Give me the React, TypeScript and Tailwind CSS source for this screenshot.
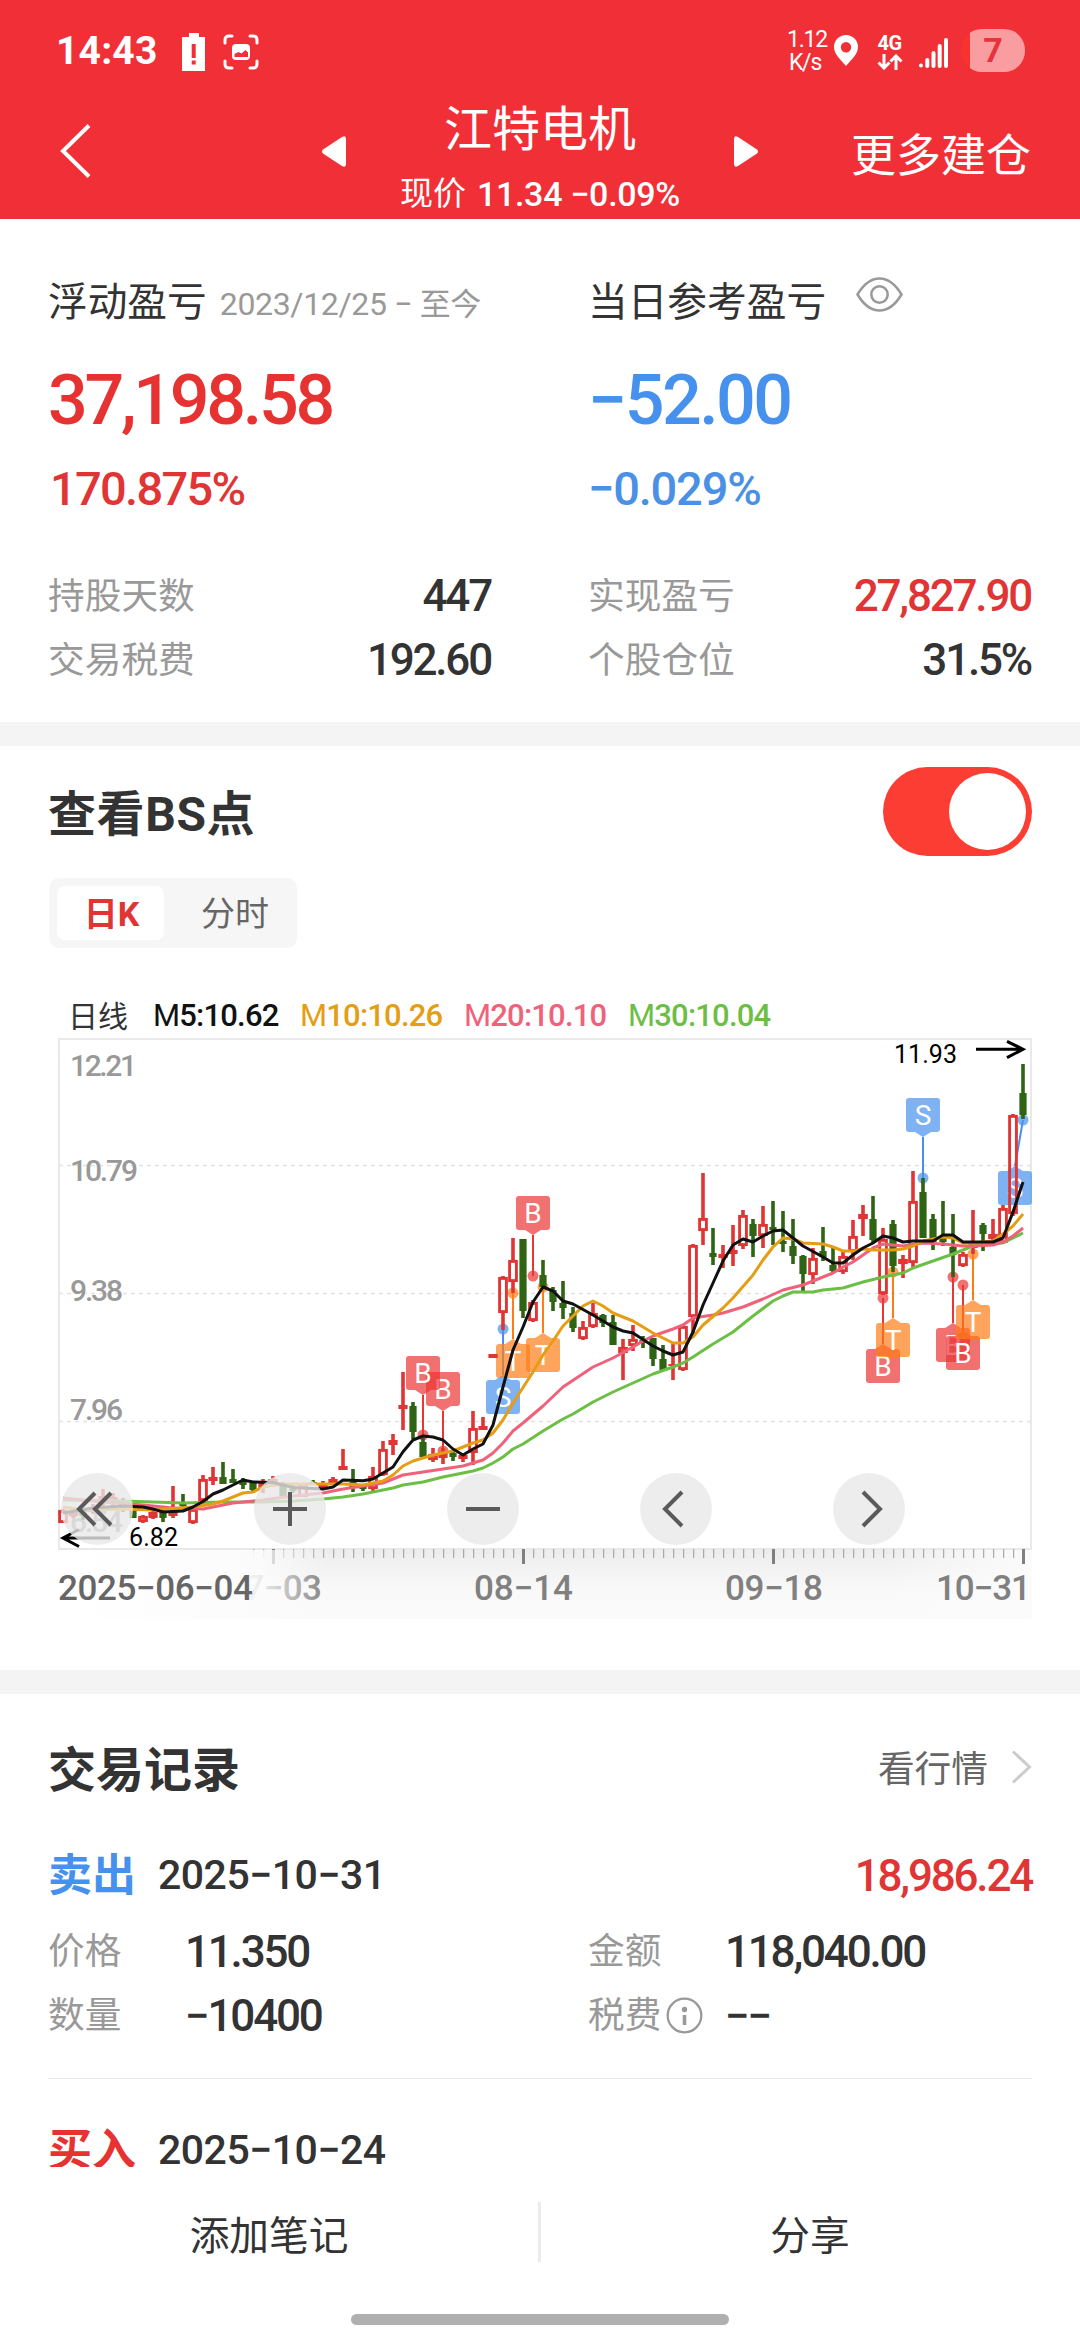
import React, { useState } from 'react';

type Candle = [kind: 'r' | 'h' | 'g', high: number, top: number, bottom: number, low: number];
type Point = [index: number, y: number];

const RED = '#e03535';
const GREEN = '#2f6414';

// r = solid red, h = hollow red, g = green; one candle every 10px
const candles: Candle[] = [
  ['h', 471, 472, 485, 485], ['r', 472, 474, 478, 480], ['g', 470, 473, 478, 482], ['r', 466, 470, 474, 476],
  ['r', 451, 458, 464, 470], ['r', 455, 459, 465, 468], ['g', 460, 464, 472, 474], ['g', 468, 469, 480, 480],
  ['h', 477, 478, 484, 485], ['r', 472, 474, 480, 481], ['g', 472, 474, 480, 484], ['r', 448, 474, 478, 480],
  ['g', 456, 465, 468, 469], ['h', 470, 471, 485, 486], ['h', 437, 441, 463, 464], ['r', 429, 439, 443, 447],
  ['g', 424, 439, 446, 446], ['g', 431, 441, 445, 445], ['g', 440, 443, 447, 451], ['g', 444, 445, 452, 455],
  ['r', 441, 443, 450, 455], ['r', 438, 441, 446, 447], ['g', 444, 445, 458, 458], ['g', 446, 450, 453, 455],
  ['h', 445, 446, 459, 459], ['g', 442, 444, 447, 447], ['r', 443, 446, 450, 451], ['r', 439, 441, 446, 447],
  ['r', 411, 428, 432, 432], ['g', 431, 444, 449, 454], ['g', 446, 448, 451, 453], ['h', 429, 438, 451, 454],
  ['h', 403, 411, 437, 438], ['r', 396, 402, 407, 417], ['r', 334, 367, 371, 392], ['g', 364, 368, 394, 401],
  ['g', 400, 404, 419, 421], ['h', 410, 416, 422, 424], ['r', 410, 414, 420, 426], ['g', 412, 415, 419, 423],
  ['r', 415, 417, 421, 424], ['h', 373, 390, 415, 427], ['r', 379, 388, 392, 392], ['r', 316, 316, 320, 320],
  ['h', 238, 239, 275, 292], ['h', 200, 222, 244, 255], ['g', 201, 201, 273, 280], ['h', 262, 264, 283, 284],
  ['g', 222, 237, 249, 249], ['g', 249, 252, 264, 273], ['g', 243, 265, 270, 281], ['g', 269, 275, 290, 294],
  ['h', 283, 289, 301, 302], ['h', 265, 275, 289, 290], ['g', 276, 277, 285, 289], ['g', 277, 284, 307, 307],
  ['h', 301, 309, 315, 342], ['h', 287, 301, 308, 313], ['g', 298, 302, 305, 310], ['g', 300, 300, 321, 328],
  ['g', 307, 321, 332, 332], ['r', 305, 326, 328, 342], ['h', 287, 288, 332, 333], ['h', 206, 207, 279, 299],
  ['h', 135, 180, 193, 207], ['g', 190, 215, 219, 227], ['r', 207, 216, 220, 230], ['r', 187, 212, 216, 228],
  ['h', 172, 177, 208, 211], ['g', 181, 186, 198, 219], ['h', 168, 186, 198, 210], ['g', 163, 189, 192, 207],
  ['g', 173, 203, 206, 214], ['g', 181, 208, 218, 226], ['g', 217, 218, 236, 253], ['h', 210, 220, 237, 246],
  ['g', 189, 213, 219, 223], ['g', 210, 227, 233, 234], ['h', 214, 218, 234, 236], ['h', 182, 198, 214, 222],
  ['h', 167, 176, 181, 198], ['g', 158, 181, 202, 205], ['h', 190, 201, 256, 257], ['g', 182, 186, 228, 234],
  ['h', 217, 221, 226, 240], ['h', 133, 163, 225, 229], ['g', 140, 154, 200, 200], ['g', 176, 181, 204, 212],
  ['g', 163, 200, 204, 208], ['g', 176, 209, 217, 239], ['h', 214, 216, 228, 229], ['r', 172, 203, 210, 216],
  ['g', 185, 187, 196, 213], ['h', 181, 196, 201, 205], ['h', 167, 170, 205, 206], ['h', 76, 77, 176, 178],
  ['g', 26, 55, 77, 81],
];

const averages: { color: string; points: Point[] }[] = [
  {
    color: '#6cbe45',
    points: [[0, 462], [6, 463], [9, 464], [12, 465], [16, 464], [20, 464], [23, 463], [26, 461], [28, 459], [30, 456], [33, 450], [34, 447], [36, 444], [38, 439], [41, 433], [42, 430], [43, 425], [44, 419], [45, 411], [46, 406], [48, 393], [50, 381], [51, 376], [53, 364], [55, 354], [57, 345], [59, 336], [61, 329], [62, 325], [63, 319], [65, 306], [67, 294], [69, 278], [71, 263], [72, 258], [73, 254], [75, 254], [76, 252], [78, 250], [80, 244], [82, 239], [84, 235], [85, 230], [87, 223], [89, 216], [90, 212], [91, 208], [92, 205], [94, 205], [95, 200], [96, 195]],
  },
  {
    color: '#f0617a',
    points: [[0, 460], [4, 464], [8, 467], [11, 470], [14, 471], [17, 465], [20, 462], [23, 458], [26, 455], [28, 451], [30, 448], [32, 445], [34, 437], [36, 434], [38, 431], [40, 428], [42, 422], [43, 415], [44, 405], [45, 393], [46, 385], [48, 368], [50, 349], [53, 329], [55, 320], [57, 309], [58, 303], [59, 298], [61, 291], [62, 287], [63, 280], [65, 277], [66, 275], [68, 269], [70, 261], [72, 252], [74, 247], [76, 239], [77, 235], [78, 229], [79, 224], [80, 217], [81, 210], [82, 206], [84, 208], [86, 205], [88, 206], [90, 208], [91, 208], [93, 207], [94, 204], [95, 198], [96, 190]],
  },
  {
    color: '#e59d14',
    points: [[0, 469], [2, 472], [6, 471], [9, 472], [13, 469], [15, 466], [16, 463], [17, 459], [18, 455], [19, 454], [20, 449], [22, 446], [28, 446], [30, 447], [32, 443], [33, 437], [34, 428], [35, 423], [36, 420], [37, 417], [38, 415], [39, 413], [41, 405], [42, 402], [43, 395], [44, 382], [45, 365], [47, 334], [48, 317], [49, 303], [50, 288], [52, 268], [53, 263], [54, 268], [55, 275], [57, 283], [59, 295], [61, 305], [62, 305], [63, 299], [64, 287], [66, 270], [67, 260], [69, 237], [70, 222], [71, 209], [72, 200], [73, 201], [74, 205], [76, 206], [77, 209], [78, 213], [79, 213], [80, 211], [81, 212], [83, 212], [84, 211], [85, 208], [86, 203], [88, 199], [89, 200], [90, 205], [91, 205], [93, 203], [94, 196], [95, 188], [96, 176]],
  },
  {
    color: '#111111',
    points: [[0, 475], [3, 470], [6, 468], [8, 469], [9, 471], [10, 474], [12, 473], [13, 469], [14, 463.5], [15, 456], [16, 452], [17, 447], [18, 442], [19, 444], [21, 444.5], [22, 447], [23, 449.5], [26, 451], [27, 449], [28, 442], [30, 442.7], [31, 441], [32, 435], [33, 429], [34, 413.7], [35, 402], [36, 398], [37, 399], [38, 402], [39, 411], [40, 417], [41, 411], [42, 406], [43, 387], [44, 349], [45, 312], [46, 289], [47, 264], [48, 249], [49, 253], [50, 263], [51, 266], [53, 277], [55, 289], [56, 293], [57, 295], [59, 308], [60, 313], [61, 317], [62, 314], [63, 294], [64, 267], [65, 245], [66, 223], [67, 207], [68, 201], [69, 204], [70, 198], [71, 193], [72, 192], [73, 200], [74, 208], [76, 219], [77, 225], [78, 225], [79, 217], [80, 210], [81, 205], [82, 198], [83, 200], [84, 204], [85, 203], [87, 203], [88, 197], [89, 197], [90, 204], [93, 204], [94, 200], [95, 174], [96, 144]],
  },
];

const markerColors = { B: '#eb3434', S: '#4791ee', T: '#ff7d17' };

const markers: { type: 'B' | 'S' | 'T'; x: number; boxTop: number; dotY: number; dotX?: number }[] = [
  { type: 'S', x: 445, boxTop: 342, dotY: 291 },
  { type: 'S', x: 865, boxTop: 60, dotY: 140 },
  { type: 'S', x: 957, boxTop: 133, dotY: 82, dotX: 965 },
  { type: 'B', x: 385, boxTop: 334, dotY: 413 },
  { type: 'B', x: 365, boxTop: 318, dotY: 397 },
  { type: 'B', x: 475, boxTop: 158, dotY: 238 },
  { type: 'T', x: 455, boxTop: 306, dotY: 255 },
  { type: 'T', x: 485, boxTop: 300, dotY: 249 },
  { type: 'B', x: 825, boxTop: 311, dotY: 260 },
  { type: 'T', x: 835, boxTop: 285, dotY: 234 },
  { type: 'B', x: 895, boxTop: 290, dotY: 239 },
  { type: 'B', x: 905, boxTop: 298, dotY: 247 },
  { type: 'T', x: 915, boxTop: 267, dotY: 216 },
];

const candleX = (i: number) => 5 + i * 10;

const StatusBar = () => (
  <div className="flex h-[101px] items-center pl-[56px] pr-[55px]">
    <span className="text-[39px] font-bold leading-[40px] tracking-[0.2px]">14:43</span>
    <svg className="ml-[24px] mt-[2px]" width="23" height="38" viewBox="0 0 23 38">
      <path d="M0 4h7V0h10v4h6v34H0z" fill="#fff" />
      <path d="M9.7 11h4v14h-4zM9.7 27.5h4v4h-4z" fill="#f12f37" />
    </svg>
    <svg className="ml-[18px] mt-[2px]" width="36" height="36" viewBox="0 0 36 36" fill="none" stroke="#fff" strokeWidth="3" strokeLinecap="round">
      <path d="M2 9V6q0-4 4-4h3M27 2h3q4 0 4 4v3M34 27v3q0 4-4 4h-3M9 34H6q-4 0-4-4v-3" />
      <rect x="9" y="10" width="18" height="16" rx="4" fill="#fff" stroke="none" />
      <path d="M11.5 23v-3l4-2 3 1.500 4-3.500 2.500 2.500V23z" fill="#f12f37" stroke="none" />
    </svg>
    <div className="ml-auto flex items-center">
      <div className="w-[36px] text-center text-[23px] leading-[23px] tracking-[-1.2px]">
        <div>1.12</div>
        <div>K/s</div>
      </div>
      <svg className="ml-[11px]" width="24" height="31" viewBox="0 0 24 31">
        <path fillRule="evenodd" fill="#fff" d="M12 0a12 12 0 0 1 12 12c0 7-6 12-12 19C6 24 0 19 0 12A12 12 0 0 1 12 0zm0 7a5.200 5.200 0 1 0 0 10.400A5.200 5.200 0 0 0 12 7z" />
      </svg>
      <div className="ml-[18px] flex w-[27px] flex-col items-center">
        <span className="mt-[2px] text-[20px] font-bold leading-[18px] tracking-[-0.5px]">4G</span>
        <svg className="mt-[2px]" width="26" height="16" viewBox="0 0 26 16" fill="none" stroke="#fff" strokeWidth="3">
          <path d="M7 0v14M1.500 8.500L7 14l5.500-5.500M19 16V2M13.500 7.500L19 2l5.500 5.500" />
        </svg>
      </div>
      <svg className="ml-[16px] mt-[4px]" width="29" height="30" viewBox="0 0 29 30" fill="#fff">
        <rect x="0" y="25.500" width="4" height="4" rx="2" />
        <rect x="6.300" y="20" width="4" height="10" rx="2" />
        <rect x="12.500" y="13" width="4" height="17" rx="2" />
        <rect x="18.700" y="6" width="4" height="24" rx="2" />
        <rect x="25" y="0" width="4" height="30" rx="2" />
      </svg>
      <div className="ml-[13px] flex h-[43px] w-[64px] items-center justify-center rounded-[21px] bg-[linear-gradient(90deg,#f8322f_9px,#f99da0_9px)] text-[34px] font-bold text-[#e8323c]">
        7
      </div>
    </div>
  </div>
);

const Header = () => (
  <header className="h-[219px] bg-[#f12f37] text-white">
    <StatusBar />
    <div className="flex h-[118px] items-start pl-[60px] pr-[49px]">
      <svg className="mt-[23px]" width="31" height="54" viewBox="0 0 31 54" fill="none" stroke="#fff" strokeWidth="4">
        <path d="M29 1.500L3 27l26 25.500" />
      </svg>
      <svg className="ml-[231px] mt-[35px]" width="25" height="31" viewBox="0 0 25 31" fill="#fff">
        <path d="M1 13.500L20 1q4-2 4 2v25q0 4-4 2L1 17.500q-2-2 0-4z" />
      </svg>
      <div className="flex w-[386px] flex-col items-center">
        <h1 className="mt-[2px] text-[48px] leading-[54px]">江特电机</h1>
        <div className="mt-[11px] flex text-[34px] leading-[52px]">
          <span className="mr-[11px] text-[33px]">现价</span>
          <span className="font-medium tracking-[-0.3px]">11.34 −0.09%</span>
        </div>
      </div>
      <svg className="mt-[35px]" width="25" height="31" viewBox="0 0 25 31" fill="#fff">
        <path d="M24 13.500L5 1Q1 -1 1 3v25q0 4 4 2L24 17.500q2-2 0-4z" />
      </svg>
      <button type="button" className="ml-auto mt-[26px] text-[45px] leading-[60px]">更多建仓</button>
    </div>
  </header>
);

const StatRow = ({ label, value, className = 'text-[#333]' }: { label: string; value: string; className?: string }) => (
  <div className="flex h-[64px] items-center justify-between">
    <span className="pt-[1px] text-[36.700px] text-[#999]">{label}</span>
    <span className={`text-[44px] font-medium tracking-[-2.200px] ${className}`}>{value}</span>
  </div>
);

const Summary = () => (
  <section className="flex h-[503px] gap-[97px] px-[48px] pt-[56px]">
    <div className="w-[443px]">
      <div className="flex h-[56px] items-center">
        <span className="text-[39.700px] text-[#333]">浮动盈亏</span>
        <span className="ml-[13px] mt-[2px] whitespace-nowrap text-[32px] tracking-[-0.350px] text-[#999]">
          2023/12/25 − <span className="text-[31px]">至今</span>
        </span>
      </div>
      <div className="mt-[25px] h-[80px] text-[70px] font-medium leading-[88px] tracking-[-3.300px] text-[#e73232]">37,198.58</div>
      <div className="mt-[21px] h-[64px] pl-[2px] text-[47px] font-medium leading-[64px] tracking-[-1.700px] text-[#df3535]">170.875%</div>
      <div className="mt-[43px]">
        <StatRow label="持股天数" value="447" />
        <StatRow label="交易税费" value="192.60" />
      </div>
    </div>
    <div className="w-[443px]">
      <div className="flex h-[56px] items-center">
        <span className="text-[39.700px] text-[#333]">当日参考盈亏</span>
        <svg className="mb-[17px] ml-[30px]" width="47" height="35" viewBox="0 0 47 35" fill="none" stroke="#999" strokeWidth="2.500">
          <path d="M1.500 17.500C9 5 16 1.500 23.500 1.500S38 5 45.500 17.500C38 30 31 33.500 23.500 33.500S9 30 1.500 17.500z" />
          <circle cx="23.500" cy="17.500" r="8.200" />
        </svg>
      </div>
      <div className="mt-[25px] h-[80px] text-[70px] font-medium leading-[88px] tracking-[-2.600px] text-[#4791ee]">−52.00</div>
      <div className="mt-[21px] h-[64px] text-[47px] font-medium leading-[64px] tracking-[-1.200px] text-[#4a90e5]">−0.029%</div>
      <div className="mt-[43px]">
        <StatRow label="实现盈亏" value="27,827.90" className="text-[#e03535]" />
        <StatRow label="个股仓位" value="31.5%" />
      </div>
    </div>
  </section>
);

const Marker = ({ type, x, boxTop, dotY, dotX = x }: (typeof markers)[number]) => {
  const color = markerColors[type];
  const below = boxTop > dotY;
  const tip = below ? boxTop - 5 : boxTop + 39;
  const base = below ? boxTop : boxTop + 34;
  return (
    <g>
      <line x1={x} y1={tip} x2={dotX} y2={dotY} stroke={color} strokeWidth="2" />
      <circle cx={dotX} cy={dotY} r="5.500" fill={color} opacity="0.7" />
      <path d={`M${x - 8} ${base}L${x} ${tip}L${x + 8} ${base}z`} fill={color} opacity="0.7" />
      <rect x={x - 17} y={boxTop} width="34" height="34" rx="3" fill={color} opacity="0.7" />
      <text x={x} y={boxTop + 27} textAnchor="middle" fontSize="28" fill="#fff">{type}</text>
    </g>
  );
};

const KLineChart = () => (
  <svg width="974" height="582" viewBox="0 0 974 582">
    <defs>
      <linearGradient id="axis" x1="0" y1="0" x2="0" y2="1">
        <stop offset="0" stopColor="#ededed" />
        <stop offset="0.600" stopColor="#f9f9f9" />
        <stop offset="1" stopColor="#fafafa" />
      </linearGradient>
      <linearGradient id="fade" x1="0" y1="0" x2="1" y2="0">
        <stop offset="0" stopColor="#fff" />
        <stop offset="0.670" stopColor="#fcfcfc" />
        <stop offset="0.760" stopColor="#fcfcfc" stopOpacity="0.850" />
        <stop offset="1" stopColor="#fafafa" stopOpacity="0" />
      </linearGradient>
      <linearGradient id="fadeRight" x1="0" y1="0" x2="1" y2="0">
        <stop offset="0" stopColor="#fbfbfb" stopOpacity="0" />
        <stop offset="1" stopColor="#fbfbfb" />
      </linearGradient>
    </defs>

    <rect x="1" y="1" width="972" height="510" fill="#fff" stroke="#e9e9e9" strokeWidth="2" />
    {[127.5, 255.5, 383.5].map(y => (
      <line key={y} x1="1" x2="973" y1={y} y2={y} stroke="#e2e2e2" strokeWidth="1.300" strokeDasharray="4 4" />
    ))}
    <g fontSize="30" fontWeight="500" fill="#999">
      <text x="12" y="38" textLength="67">12.21</text>
      <text x="12" y="143" textLength="68">10.79</text>
      <text x="12" y="263" textLength="53">9.38</text>
      <text x="12" y="382" textLength="53">7.96</text>
      <text x="12" y="494" textLength="53">6.54</text>
    </g>

    {markers.map(m => <Marker key={m.type + m.x} {...m} />)}

    {candles.map(([kind, high, top, bottom, low], i) => {
      const x = candleX(i);
      if (kind === 'h') {
        return (
          <g key={i} stroke={RED} fill="none">
            <path d={`M${x} ${high}V${top}M${x} ${bottom}V${low}`} strokeWidth="3.600" />
            <rect x={x - 3.4} y={top + 1.4} width="6.800" height={Math.max(bottom - top - 2.8, 1)} strokeWidth="2.900" />
          </g>
        );
      }
      const color = kind === 'g' ? GREEN : RED;
      const half = kind === 'g' ? 3.6 : 4.6;
      return (
        <g key={i} fill={color}>
          <rect x={x - 1.8} y={high} width="3.600" height={low - high} />
          <rect x={x - half} y={top} width={half * 2} height={bottom - top} />
        </g>
      );
    })}

    {averages.map(({ color, points }) => (
      <polyline
        key={color}
        points={points.map(([i, y]) => `${candleX(i)},${y}`).join(' ')}
        fill="none"
        stroke={color}
        strokeWidth="3"
        strokeLinejoin="round"
      />
    ))}

    <g fontSize="25" fill="#000">
      <text x="836" y="25" textLength="63">11.93</text>
      <text x="71" y="508" textLength="49">6.82</text>
    </g>
    <g stroke="#000" strokeWidth="3" fill="none">
      <path d="M918 11.300H965M949 3.300L965 11.300L949 19.700" />
      <path d="M52 500H5M21 491.500L5 500L21 508.500" />
    </g>

    <rect x="0" y="512" width="974" height="69" fill="url(#axis)" />
    <rect x="824" y="512" width="150" height="69" fill="url(#fadeRight)" />
    {Array.from({ length: 78 }, (_, i) => 195 + i * 10).map(x => (
      <rect key={x} x={x + 0.2} y="511" width="1" height="9" fill="#999" />
    ))}
    {[215.5, 465.5, 715.5, 965.5].map(x => (
      <rect key={x} x={x - 1.5} y="511" width="3" height="15" fill="#808080" />
    ))}
    <g fontSize="35" fontWeight="500" fill="#808080">
      <text x="167" y="562" textLength="97">07−03</text>
      <text x="416" y="562" textLength="99">08−14</text>
      <text x="667" y="562" textLength="98">09−18</text>
      <text x="878" y="562" textLength="95">10−31</text>
    </g>
    <rect x="0" y="512" width="270" height="69" fill="url(#fade)" />
    <text x="0" y="562" textLength="195" fontSize="35" fontWeight="500" fill="#666">2025−06−04</text>
  </svg>
);

const chartButtons = [
  'M34 20L18 36L34 52M50 20L34 36L50 52',
  'M19 36H53M36 19V53',
  'M19 36H53',
  'M42 19L25 36L42 53',
  'M30 19L47 36L30 53',
];

const legend = [
  { period: 5, value: '10.62', className: 'w-[147px] text-[#111]' },
  { period: 10, value: '10.26', className: 'w-[164px] text-[#e59d14]' },
  { period: 20, value: '10.10', className: 'w-[164px] text-[#f0617a]' },
  { period: 30, value: '10.04', className: 'w-[164px] text-[#6cbe45]' },
];

const ChartSection = () => {
  const [tab, setTab] = useState('日K');
  const [showPoints, setShowPoints] = useState(true);

  return (
    <section className="h-[924px] px-[48px] pt-[21px]">
      <div className="flex h-[89px] items-center justify-between">
        <h2 className="pt-[7px] text-[48px] font-bold tracking-[0.600px] text-[#333]">查看BS点</h2>
        <button
          type="button"
          role="switch"
          aria-checked={showPoints}
          onClick={() => setShowPoints(!showPoints)}
          className={`flex h-[89px] w-[149px] items-center rounded-full px-[6px] ${showPoints ? 'justify-end bg-[#fb3d33]' : 'bg-gray-300'}`}
        >
          <span className="h-[77px] w-[77px] rounded-full bg-white" />
        </button>
      </div>

      <div className="ml-[1px] mt-[22px] flex h-[70px] w-[248px] rounded-[10px] bg-[#f6f6f6] p-[8px] text-[34px]">
        {['日K', '分时'].map(name => (
          <button
            key={name}
            type="button"
            onClick={() => setTab(name)}
            className={`flex items-center justify-center rounded-[8px] pt-[3px] ${
              tab === name ? 'w-[107px] bg-white pl-[2px] font-bold text-[#e03535]' : 'grow pl-[17px] text-[#666]'
            }`}
          >
            {name}
          </button>
        ))}
      </div>

      <div className="mt-[46px] flex h-[44px] items-center pl-[20px] text-[30px]">
        <span className="w-[85px] text-[#333]">日线</span>
        {legend.map(({ period, value, className }) => (
          <span key={period} className={`text-[31px] font-medium tracking-[-0.800px] ${className}`}>
            <span className="font-normal">M</span>{period}:{value}
          </span>
        ))}
      </div>

      <div className="relative ml-[10px]">
        <KLineChart />
        <div className="absolute left-[3px] top-[435px] flex gap-[121px]">
          {chartButtons.map(d => (
            <button key={d} type="button" className="h-[72px] w-[72px] rounded-full bg-[#e8e8e8]/80">
              <svg width="72" height="72" viewBox="0 0 72 72" fill="none" stroke="#5a5a5a" strokeWidth="4">
                <path d={d} />
              </svg>
            </button>
          ))}
        </div>
      </div>
    </section>
  );
};

const RecordHead = ({ side, date, amount }: { side: 'buy' | 'sell'; date: string; amount?: string }) => (
  <div className="flex h-[60px] items-center">
    <span className={`w-[110px] text-[44px] font-bold ${side === 'sell' ? 'text-[#4791ee]' : 'text-[#e73232]'}`}>
      {side === 'sell' ? '卖出' : '买入'}
    </span>
    <span className="text-[41px] font-medium tracking-[-0.500px] text-[#333]">{date}</span>
    {amount && <span className="ml-auto text-[44px] font-medium tracking-[-2.200px] text-[#e03535]">{amount}</span>}
  </div>
);

const Field = ({ label, value, info }: { label: string; value: string; info?: boolean }) => (
  <div className="flex h-[64px] items-center">
    <span className="flex w-[137px] items-center text-[36.700px] text-[#999]">
      {label}
      {info && (
        <svg className="ml-[5px]" width="37" height="37" viewBox="0 0 37 37" fill="none" stroke="#999">
          <circle cx="18.500" cy="18.500" r="16.800" strokeWidth="2.300" />
          <circle cx="18.500" cy="12.500" r="2.700" fill="#999" stroke="none" />
          <path d="M18.500 18V28" strokeWidth="3.600" />
        </svg>
      )}
    </span>
    <span className="text-[44px] font-medium tracking-[-2.200px] text-[#333]">{value}</span>
  </div>
);

const Records = () => (
  <section className="h-[473px] overflow-hidden px-[48px]">
    <div className="flex h-[152px] items-center justify-between">
      <h2 className="pt-[2px] text-[48px] font-bold text-[#333]">交易记录</h2>
      <button type="button" className="flex items-center text-[36.700px] text-[#666]">
        看行情
        <svg className="mb-[6px] ml-[24px]" width="20" height="34" viewBox="0 0 20 34" fill="none" stroke="#ccc" strokeWidth="3">
          <path d="M1 1.500L17.500 17L1 32.500" />
        </svg>
      </button>
    </div>
    <div className="border-b-[1.500px] border-[#e8e8e8] pb-[30px]">
      <RecordHead side="sell" date="2025−10−31" amount="18,986.24" />
      <div className="mt-[14px] grid grid-cols-[540px_1fr]">
        <Field label="价格" value="11.350" />
        <Field label="金额" value="118,040.00" />
        <Field label="数量" value="−10400" />
        <Field label="税费" value="−−" info />
      </div>
    </div>
    <div className="pt-[42px]">
      <RecordHead side="buy" date="2025−10−24" />
    </div>
  </section>
);

const BottomBar = () => (
  <footer className="flex h-[173px] flex-col items-center bg-white">
    <div className="flex h-[147px] w-full items-center text-[39.700px] text-[#333]">
      <button type="button" className="mb-[8px] w-[538px]">添加笔记</button>
      <span className="mb-[18px] h-[60px] w-[3px] bg-[#ececec]" />
      <button type="button" className="mb-[8px] w-[538px]">分享</button>
    </div>
    <span className="h-[11px] w-[378px] rounded-full bg-[#b0b0b0]" />
  </footer>
);

export default function App() {
  return (
    <div className="h-[2340px] w-[1080px] overflow-hidden bg-white font-[Roboto,'Noto_Sans_CJK_SC',sans-serif]">
      <Header />
      <Summary />
      <div className="h-[24px] bg-[#f4f4f4]" />
      <ChartSection />
      <div className="h-[24px] bg-[#f4f4f4]" />
      <Records />
      <BottomBar />
    </div>
  );
}
